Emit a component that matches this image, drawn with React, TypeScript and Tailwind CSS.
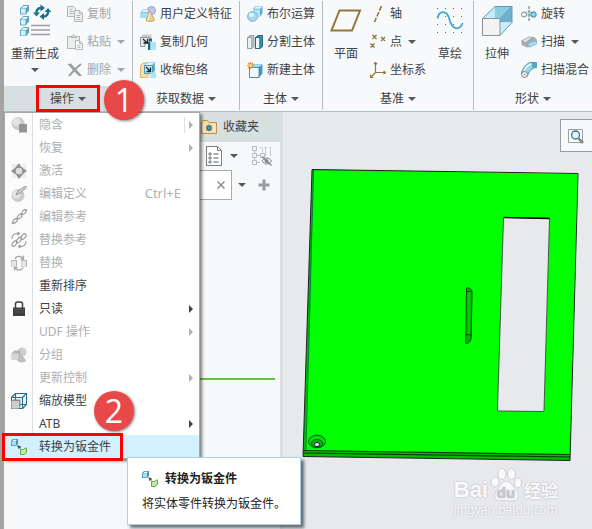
import type { ReactNode } from "react";
import clsx from "clsx";

function Caret({ muted = false }: { muted?: boolean }) {
  return (
    <svg
      className={clsx("h-1 w-2 shrink-0", muted ? "fill-[#a3a5a7]" : "fill-[#55585a]")}
      viewBox="0 0 8 4"
    >
      <path d="M0 0h8L4 4z" />
    </svg>
  );
}

function SmallCube({ x, y }: { x: number; y: number }) {
  return (
    <g transform={`translate(${x} ${y})`}>
      <path d="M.5 3 3 .5h5.500v5.500L6 9H.5z" fill="#55a7c8" />
      <path d="M.5 3H6v6H.5z" fill="#d4f1fb" stroke="#4a9dbf" strokeWidth=".8" />
      <path d="M1.500 2.700 3.500 1h4.500L6.300 2.700z" fill="#fff" />
      <path d="M3 .5h5.500v5.500" fill="none" stroke="#3b8db0" strokeWidth=".7" />
    </g>
  );
}

/* Ribbon icons */

function RegenerateIcon() {
  return (
    <svg className="h-8 w-8" viewBox="0 0 32 32">
      <SmallCube x={1} y={1} />
      <SmallCube x={1} y={12} />
      <SmallCube x={1} y={23} />
      <path d="M12 21.500h19M12 26h19M12 30.500h19" stroke="#9b9d9f" strokeWidth="1.600" />
      <path d="M17.500 10C17 6.500 18.500 4 22 4M29 6.500c.5 3.500-1 6-4.500 6" fill="none" stroke="#1b6f8f" strokeWidth="2.400" />
      <path d="M21.500.5 26 4l-4.500 3.500zM25 9v7l-4.500-3.500zM14 8.500h7L17.500 12.500zM25.500 8h7L29 4z" fill="#1b6f8f" />
    </svg>
  );
}

function CopyIcon() {
  return (
    <svg className="h-4 w-4" viewBox="0 0 16 16" stroke="#b3b5b7" fill="#eff0f1">
      <path d="M.5.5h6l2 2v8h-8z" />
      <path d="M2.500 3.500h3M2.500 5.500h4M2.500 7.500h4" />
      <path d="M7.500 4.500h5l3 3v8h-8z" />
      <path d="M12.500 4.500v3h3M9.500 9.500h4M9.500 11.500h4M9.500 13.500h4" fill="none" />
    </svg>
  );
}

function PasteIcon() {
  return (
    <svg className="h-4 w-4" viewBox="0 0 16 16" stroke="#b3b5b7" fill="#eceded">
      <path d="M.5 2.500h12v12H.5z" />
      <path d="M3.500 3.500v-1h2l1-2 1 2h2v1z" />
      <path d="M8.500 6.500h4l3 3v6h-7z" fill="#f8f9fa" />
      <path d="M12.500 6.500v3h3M10.500 11.500h3M10.500 13.500h3" fill="none" />
    </svg>
  );
}

function DeleteIcon() {
  return (
    <svg className="h-4 w-4" viewBox="0 0 16 16">
      <path d="m.5 2 3.500-.5C7 5 11 9 15 14h-3C8 10.500 4 6 .5 2z" fill="#9a9c9e" />
      <path d="M14 2C9.500 5.500 5 10 2 14" stroke="#9a9c9e" strokeWidth="2" fill="none" />
    </svg>
  );
}

function UserFeatureIcon() {
  return (
    <svg className="h-4 w-4" viewBox="0 0 16 16">
      <circle cx="11.500" cy="4.500" r="4" fill="#c3c8ea" stroke="#7a86c4" strokeWidth=".7" />
      <path d="M.5 6.500 3 3.500h7L8 6.500V12H.5z" fill="#5fb0d0" />
      <path d="M1.500 6 3.300 4H9L7.500 6z" fill="#e3f6fd" />
      <path d="M.5 6.500H8V12H.5z" fill="#a6def4" />
      <path d="m10 5 4.500 9c-1 2-7 2-8.500 0z" fill="#eccf92" stroke="#b58b3d" strokeWidth=".7" />
      <path d="M9.800 6.500 8 14" stroke="#faedcf" strokeWidth="1.200" />
    </svg>
  );
}

function CopyGeometryIcon() {
  return (
    <svg className="h-4 w-4" viewBox="0 0 16 16">
      <path d="M.5 3.500 3 .5h8.500V4L9 6.500z" fill="#c7cbcf" />
      <path d="M.5 3.500H9V9H5v3.500H.5z" fill="#e6e8ea" stroke="#7c8085" strokeWidth=".8" />
      <path d="m3 5 3.500 3.500M7.500 5v4h-4" stroke="#222" strokeWidth="1.300" fill="none" />
      <path d="M9 4.500h3V7.500H9zM8 8h2.500v8H8z" fill="#1d6485" />
      <path d="M10.500 8H16v8h-5.500z" fill="#a7e6fb" />
    </svg>
  );
}

function ShrinkwrapIcon() {
  return (
    <svg className="h-4 w-4" viewBox="0 0 16 16">
      <path d="M.5 3.500 3 1h5v14.500H.5z" fill="#f8e2ac" stroke="#c49c4a" strokeWidth=".7" />
      <path d="M4 3.500 6.500.5H15v8L12.500 11.500H4z" fill="#5fb0cf" />
      <path d="M5 3 7 1h7l-1.500 2z" fill="#e0f5fc" />
      <path d="M4.500 3.500h8v8h-8z" fill="#bdeafa" stroke="#2b7ea2" strokeWidth=".7" />
      <path d="m6 5 4 4M10.500 5.500v4h-4" stroke="#222" strokeWidth="1.300" fill="none" />
      <path d="M10.500 10.500H16V16h-5.500z" fill="#a7e6fb" />
      <path d="M4.500 12.500H9.500v3h-5z" fill="#f5dda2" />
    </svg>
  );
}

function BooleanIcon() {
  return (
    <svg className="h-4 w-4" viewBox="0 0 16 16">
      <path d="M6 3 8 .5h7.500v7L13 10.500H6z" fill="#5fb0cf" />
      <path d="M6 3.500h7v7H6z" fill="#b5e5f7" />
      <path d="M7 2.800 8.500 1H15l-2 1.800z" fill="#e8f8fd" />
      <circle cx="5.500" cy="10.500" r="5" fill="#a5d9ec" stroke="#5ba7c4" strokeWidth=".7" />
      <ellipse cx="4.500" cy="9" rx="2.500" ry="2" fill="#e4f6fc" />
    </svg>
  );
}

function SplitBodyIcon() {
  return (
    <svg className="h-4 w-4" viewBox="0 0 16 16" strokeWidth=".9">
      <path d="M.5 3.500 3 1.500h4v11l-2 2H.5z" fill="#c1cace" stroke="#8d999f" />
      <path d="M.5 3.500h4.300v11H.5z" fill="#e8f2f5" stroke="#8d999f" />
      <path d="m8.500 3.500 2.500-2h4.500v11l-2.500 2H8.500z" fill="#3d91b5" stroke="#17617f" />
      <path d="M8.500 3.500h4.300v11H8.500z" fill="#eaf8fd" stroke="#17617f" />
    </svg>
  );
}

function NewBodyIcon() {
  return (
    <svg className="h-4 w-4" viewBox="0 0 16 16">
      <path d="m2.500 5.500 3-3h10v9L12 15.500H2.500z" fill="#4b9bbb" />
      <path d="M5 5h7l2.500-2H6z" fill="#a2dff5" />
      <path d="M2.500 5.500H12v10H2.500z" fill="#f1fafd" stroke="#2d7898" strokeWidth=".8" />
      <path d="M3.500 0v7M0 3.500h7M1 1l5 5M6 1 1 6" stroke="#e8912a" strokeWidth="1.200" />
      <circle cx="3.500" cy="3.500" r="1.300" fill="#fff3c4" />
    </svg>
  );
}

function PlaneIcon() {
  return (
    <svg className="h-8 w-8" viewBox="0 0 32 32">
      <path d="M9.500 6.500H30L22 26.500H1.500z" fill="none" stroke="#94763a" strokeWidth="2" />
    </svg>
  );
}

function AxisIcon() {
  return (
    <svg className="h-4 w-4" viewBox="0 0 16 16">
      <path d="M11.500 0 4.500 16" stroke="#94763a" strokeWidth="1.600" strokeDasharray="5 1.500" />
    </svg>
  );
}

function PointIcon() {
  return (
    <svg className="h-4 w-4" viewBox="0 0 16 16" stroke="#94763a" strokeWidth="1.400">
      <path d="m2.500 1 4 4M6.500 1l-4 4M11 3l4 4M15 3l-4 4M.5 9.500l4 4M4.500 9.500l-4 4" />
    </svg>
  );
}

function CsysIcon() {
  return (
    <svg className="h-4 w-4" viewBox="0 0 16 16" stroke="#94763a" strokeWidth="1.200" fill="none">
      <path d="M5.500 0v10.500H15M5.500 10.500l-5 5M4 2 5.500.5 7 2M13.500 9l2 1.500-2 1.500M.5 12.500v3h3" />
    </svg>
  );
}

const gridDots = [3, 11, 19, 27];

function SketchIcon() {
  return (
    <svg className="h-8 w-8" viewBox="0 0 32 32">
      {gridDots.map((x) =>
        gridDots.map((y) => <rect key={`${x}-${y}`} x={x} y={y + 1} width="1" height="1" fill="#666" />)
      )}
      <path
        d="M3.500 14.500C5 6 13 5.500 15.500 15.500S25 27.500 28.700 19"
        fill="none"
        stroke="#3ea8d6"
        strokeWidth="1.800"
      />
    </svg>
  );
}

function ExtrudeIcon() {
  return (
    <svg className="h-8 w-8" viewBox="0 0 32 32">
      <path d="M1.500 14.500 14 2.500h17L19 14.500z" fill="#c3edfb" />
      <path d="M14 2.500h17L19 14.500h-5z" fill="#8ccce2" />
      <path d="m19 14.500 12-12v16H19z" fill="#6fb1cc" />
      <path d="M19 31.500V18.500h12z" fill="#c8effb" />
      <path d="M1.500 14.500 14 2.500h17v16l-12 13M19 14.500l12-12" fill="none" stroke="#5a9db8" />
      <path d="M1.500 14.500H19v17H1.500z" fill="#f3f3f3" stroke="#8f9497" />
    </svg>
  );
}

function RevolveIcon() {
  return (
    <svg className="h-4 w-4" viewBox="0 0 16 16">
      <path d="M3 6c3-1.500 7-1.500 10 0v5c-3-1.500-7-1.500-10 0z" fill="#c4e4ef" />
      <circle cx="3" cy="8.500" r="2.500" fill="#f3f5f6" stroke="#7c8489" />
      <circle cx="12.500" cy="8.500" r="2.700" fill="#8ad5f0" stroke="#2687ac" />
      <path d="M8 0v16" stroke="#666" strokeDasharray="3 1" />
    </svg>
  );
}

function SweepIcon() {
  return (
    <svg className="h-4 w-4" viewBox="0 0 16 16">
      <path d="m.5 7 7-4h5L15.500 5v3L9 8v5l-3 .5L.5 11z" fill="#a7aeb2" />
      <path d="m.5 7 7-4 5 .5L7 6.500 6 9z" fill="#dde1e3" stroke="#878e92" strokeWidth=".6" />
      <path d="M7 9 15.500 6.500V10L9 13l-2-1z" fill="#a6dcef" stroke="#5a9db8" strokeWidth=".6" />
    </svg>
  );
}

function SweptBlendIcon() {
  return (
    <svg className="h-4 w-4" viewBox="0 0 16 16">
      <path d="M.5 11C2 5 6 1 10 .5h5.500v5C11 6 8 9 6.500 14z" fill="#9bd7ec" stroke="#327f9f" strokeWidth=".8" />
      <path d="M11 .5h4.500v5L11 6z" fill="#5aa7c5" />
      <path d="M3 9C5 5 7 3 10 2" stroke="#e5f8fd" strokeWidth="1.500" fill="none" />
      <circle cx="3.500" cy="12.500" r="3" fill="#eceeef" stroke="#7b8387" />
      <path d="M3 12h1v1H3z" fill="#555" />
    </svg>
  );
}

/* Menu icons */

function SuppressIcon() {
  return (
    <svg className="h-4 w-4" viewBox="0 0 16 16">
      <circle cx="7" cy="6.500" r="6.500" fill="#cbcbcb" />
      <circle cx="5.500" cy="5" r="4" fill="#e4e4e4" />
      <path d="M8 7h8v8.500H8z" fill="#959595" />
    </svg>
  );
}

function ActivateIcon() {
  return (
    <svg className="h-4 w-4" viewBox="0 0 16 16">
      <path d="M1 1h14v14H1z" fill="#ededed" />
      <path d="m8 0 2 4 2.500 1.500L16 8l-3.500 2.500L8 16l-3-4.500L0 8l4-3z" fill="#929292" />
      <circle cx="8" cy="8" r="4" fill="#dedede" stroke="#8e8e8e" strokeWidth="1.300" />
    </svg>
  );
}

function EditDefinitionIcon() {
  return (
    <svg className="h-4 w-4" viewBox="0 0 16 16">
      <circle cx="7" cy="9.500" r="6.500" fill="#cacaca" />
      <circle cx="5.500" cy="8.500" r="4" fill="#e5e5e5" />
      <path d="m5 9 2-4 7.500-5 1 1.500L9 7z" fill="#d5d5d5" stroke="#8b8b8b" strokeWidth=".9" />
    </svg>
  );
}

function EditReferencesIcon() {
  return (
    <svg className="h-4 w-4" viewBox="0 0 16 16" fill="none" stroke="#999" strokeWidth="1.100">
      <ellipse cx="4" cy="12" rx="2.800" ry="1.500" transform="rotate(-45 4 12)" />
      <ellipse cx="8.500" cy="7.500" rx="2.800" ry="1.500" transform="rotate(-45 8.500 7.500)" />
      <ellipse cx="13" cy="3" rx="2.800" ry="1.500" transform="rotate(-45 13 3)" />
      <path d="m1 15 2-2M5.500 10.500l1.500-1.500M10 6l1.500-1.500M14 2l1.500-1.500" />
    </svg>
  );
}

function ReplaceReferencesIcon() {
  return (
    <svg className="h-4 w-4" viewBox="0 0 16 16" fill="none" stroke="#9b9b9b" strokeWidth="1.100">
      <ellipse cx="3.500" cy="11.500" rx="3.300" ry="1.800" transform="rotate(-50 3.500 11.500)" />
      <ellipse cx="8" cy="8" rx="3.300" ry="1.800" transform="rotate(-50 8 8)" />
      <ellipse cx="12.500" cy="4.500" rx="3.300" ry="1.800" transform="rotate(-50 12.500 4.500)" />
      <path d="M1 7c0-4 2-6 7-5.500M6.500 0l2 1.500-2 1.500M15 9c0 4-2 6-7 5.500M9.500 13l-2 1.500 2 1.500" />
    </svg>
  );
}

function ReplaceIcon() {
  return (
    <svg className="h-4 w-4" viewBox="0 0 16 16">
      <path
        d="M4 4c1.500-3.500 6.500-3.500 8 0M12.500.5v3.500h-3M12 12.500c-1.500 3.500-6.500 3.500-8 0M3.500 15.500v-3h3"
        fill="none"
        stroke="#a5a5a5"
        strokeWidth="1.300"
      />
      <path d="M0 5h6v6.500H0zM10 5h6v6.500h-6z" fill="#b5b5b5" />
      <path d="M.5 6H5v5H.5zM10.500 6H15v5h-4.500z" fill="#e6e6e6" />
    </svg>
  );
}

function LockIcon() {
  return (
    <svg className="h-4 w-4" viewBox="0 0 16 16">
      <path d="M4.500 7V3c0-1.500 1-2 2-2h3c1 0 2 .5 2 2v4" fill="none" stroke="#3f3f3f" strokeWidth="1.500" />
      <path d="M2 6.500h12V15H2z" fill="#3f3f3f" />
      <path d="M3 8.500h10M3 11h10" stroke="#555" />
    </svg>
  );
}

function GroupIcon() {
  return (
    <svg className="h-4 w-4" viewBox="0 0 16 16">
      <circle cx="11" cy="5" r="4.500" fill="#cecece" />
      <path d="m.5 6.500 3-3h6v6L8 12.500H.5z" fill="#b3b3b3" />
      <path d="M.5 6.500h7v6h-7z" fill="#d6d6d6" />
      <path d="m10 6.500 5 7c-1 2.500-7 2.500-9 0z" fill="#bfbfbf" />
    </svg>
  );
}

function ScaleModelIcon() {
  return (
    <svg className="h-4 w-4" viewBox="0 0 16 16">
      <path
        d="M.5 4.500h11v11H.5zM.5 4.500l4-4h11v11l-4 4M11.500 4.500l4-4M4.500.5v11h11M.5 15.500l4-4"
        fill="#eef8fb"
        fillOpacity=".5"
        stroke="#256f8c"
        strokeWidth="1.100"
      />
      <path d="m.5 8 1.500-1.500h7.500v7L8 15.500H.5z" fill="#8f8f8f" />
      <path d="M.5 8H8v7.500H.5z" fill="#cdcdcd" />
    </svg>
  );
}

function ConvertIcon() {
  return (
    <svg className="h-4 w-4 shrink-0" viewBox="0 0 16 16">
      <path d="M0 2 2 0h5v4.500L5 7H0z" fill="#3d90b6" />
      <path d="M.7 2.200H5V6.300H.7z" fill="#a5e0f8" />
      <path d="M2.500.8H6L5 2H1.500z" fill="#eafaff" />
      <path d="m6.500 6.500 2 2M9 7v2H7" stroke="#444" strokeWidth="1.200" fill="none" />
      <path d="M9.500 10.500h3l1.500-1.500h1.500v4.500L13 15.500H9.500z" fill="#bfeba2" stroke="#67a44d" />
    </svg>
  );
}

/* Ribbon */

function BigButton({ icon, label, caret = false }: { icon: ReactNode; label: string; caret?: boolean }) {
  return (
    <button className="flex shrink-0 flex-col items-center pt-1">
      {icon}
      <span className="mt-2 leading-5">{label}</span>
      {caret && (
        <span className="mt-1">
          <Caret />
        </span>
      )}
    </button>
  );
}

interface SmallButtonProps {
  icon: ReactNode;
  label: string;
  caret?: boolean;
  muted?: boolean;
}

function SmallButton({ icon, label, caret = false, muted = false }: SmallButtonProps) {
  return (
    <button
      disabled={muted}
      className={clsx("flex h-7 items-center gap-1 whitespace-nowrap", muted && "text-[#a3a5a7]")}
    >
      {icon}
      <span>{label}</span>
      {caret && (
        <span className="ml-0.5">
          <Caret muted={muted} />
        </span>
      )}
    </button>
  );
}

interface RibbonGroupProps {
  label: string;
  className: string;
  active?: boolean;
  children: ReactNode;
}

function RibbonGroup({ label, className, active = false, children }: RibbonGroupProps) {
  return (
    <section className={clsx("flex flex-col", className)}>
      <div className="flex h-[86px]">{children}</div>
      <div className={clsx("flex h-[25px] justify-center", active && "bg-[#d8dfe2]")}>
        <button
          className={clsx(
            "flex items-center gap-1 px-3.5",
            active && "-mt-px -mb-px outline-3 -outline-offset-3 outline-[#ff0000]"
          )}
        >
          {label}
          <Caret />
        </button>
      </div>
    </section>
  );
}

function Separator() {
  return <div className="my-px w-px shrink-0 bg-[#b5bbbe]" />;
}

function Ribbon() {
  return (
    <header className="flex h-28 border-b border-[#b2bfbf] bg-[#f8f9fb]">
      <RibbonGroup label="操作" className="w-32 shrink-0" active>
        <div className="flex gap-2 pl-[7px]">
          <BigButton icon={<RegenerateIcon />} label="重新生成" caret />
          <div>
            <SmallButton icon={<CopyIcon />} label="复制" muted />
            <SmallButton icon={<PasteIcon />} label="粘贴" caret muted />
            <SmallButton icon={<DeleteIcon />} label="删除" caret muted />
          </div>
        </div>
      </RibbonGroup>
      <Separator />
      <RibbonGroup label="获取数据" className="w-[106px] shrink-0">
        <div className="pl-[7px]">
          <SmallButton icon={<UserFeatureIcon />} label="用户定义特征" />
          <SmallButton icon={<CopyGeometryIcon />} label="复制几何" />
          <SmallButton icon={<ShrinkwrapIcon />} label="收缩包络" />
        </div>
      </RibbonGroup>
      <Separator />
      <RibbonGroup label="主体" className="w-[82px] shrink-0">
        <div className="pl-[7px]">
          <SmallButton icon={<BooleanIcon />} label="布尔运算" />
          <SmallButton icon={<SplitBodyIcon />} label="分割主体" />
          <SmallButton icon={<NewBodyIcon />} label="新建主体" />
        </div>
      </RibbonGroup>
      <Separator />
      <RibbonGroup label="基准" className="w-[150px] shrink-0">
        <div className="flex gap-2 pl-[7px]">
          <BigButton icon={<PlaneIcon />} label="平面" />
          <div className="w-14">
            <SmallButton icon={<AxisIcon />} label="轴" />
            <SmallButton icon={<PointIcon />} label="点" caret />
            <SmallButton icon={<CsysIcon />} label="坐标系" />
          </div>
          <BigButton icon={<SketchIcon />} label="草绘" />
        </div>
      </RibbonGroup>
      <Separator />
      <RibbonGroup label="形状" className="min-w-0 flex-1">
        <div className="flex gap-2 pl-[7px]">
          <BigButton icon={<ExtrudeIcon />} label="拉伸" />
          <div>
            <SmallButton icon={<RevolveIcon />} label="旋转" />
            <SmallButton icon={<SweepIcon />} label="扫描" caret />
            <SmallButton icon={<SweptBlendIcon />} label="扫描混合" />
          </div>
        </div>
      </RibbonGroup>
    </header>
  );
}

/* Operations menu */

interface MenuEntry {
  label: string;
  icon?: ReactNode;
  shortcut?: string;
  submenu?: boolean;
  split?: boolean;
  enabled?: boolean;
  selected?: boolean;
}

const menuEntries: MenuEntry[] = [
  { label: "隐含", icon: <SuppressIcon />, submenu: true, split: true },
  { label: "恢复", submenu: true },
  { label: "激活", icon: <ActivateIcon /> },
  { label: "编辑定义", icon: <EditDefinitionIcon />, shortcut: "Ctrl+E" },
  { label: "编辑参考", icon: <EditReferencesIcon /> },
  { label: "替换参考", icon: <ReplaceReferencesIcon /> },
  { label: "替换", icon: <ReplaceIcon /> },
  { label: "重新排序", enabled: true },
  { label: "只读", icon: <LockIcon />, submenu: true, enabled: true },
  { label: "UDF 操作", submenu: true },
  { label: "分组", icon: <GroupIcon /> },
  { label: "更新控制", submenu: true },
  { label: "缩放模型", icon: <ScaleModelIcon />, enabled: true },
  { label: "ATB", submenu: true, enabled: true },
  { label: "转换为钣金件", icon: <ConvertIcon />, enabled: true, selected: true },
];

function OperationsMenu() {
  return (
    <div
      role="menu"
      className="absolute top-0 left-0 w-[196px] border border-[#a6a9ab] bg-white shadow-[2px_2px_3px_rgba(0,0,0,0.5)]"
    >
      {menuEntries.map((entry) => (
        <button
          key={entry.label}
          role="menuitem"
          disabled={!entry.enabled}
          className={clsx(
            "flex h-[23px] w-full items-center text-left",
            entry.selected && "bg-[#d2f0fe]",
            entry.enabled ? "text-[#3f4245]" : "text-[#aeb0b2]"
          )}
        >
          <span
            className={clsx(
              "flex h-full w-7 items-center justify-center",
              !entry.selected && "border-r border-[#dcdfe1] bg-[#fbfbfb]"
            )}
          >
            {entry.icon}
          </span>
          <span className="flex-1 pl-1.5">{entry.label}</span>
          {entry.shortcut && <span className="pr-[18px] text-[13px]">{entry.shortcut}</span>}
          {entry.submenu && (
            <span className={clsx("flex h-4 items-center pr-1.5 pl-1", entry.split && "border-l border-[#dcdfe1]")}>
              <svg className="h-2 w-1 fill-current" viewBox="0 0 4 8">
                <path d="M0 0v8l4-4z" />
              </svg>
            </span>
          )}
        </button>
      ))}
    </div>
  );
}

function Tooltip() {
  return (
    <div
      role="tooltip"
      className="absolute top-[345px] left-[123px] w-[174px] border border-[#a9d3e8] bg-white py-2.5 pl-3.5 text-[#222] shadow-[3px_3px_3px_rgba(0,0,0,0.55)]"
    >
      <div className="flex h-[22px] items-center gap-[7px] font-bold">
        <ConvertIcon />
        转换为钣金件
      </div>
      <p className="h-6 pt-1 leading-5 whitespace-nowrap">将实体零件转换为钣金件。</p>
    </div>
  );
}

/* Model tree */

function ModelTree() {
  return (
    <aside className="flex w-[279px] shrink-0 flex-col border-r-3 border-[#dae1e1] bg-[#f6f8fa]">
      <div className="flex h-[30px] items-center gap-1.5 bg-[#d7dfdf] pl-[197px]">
        <svg className="h-4 w-4" viewBox="0 0 16 16">
          <path d="M.5 14.500V3l1-1.500h5L8 3.500h7.500v11z" fill="#f7dda0" stroke="#b99352" />
          <path d="M1.500 5h13v8.500h-13z" fill="#fbe6b8" />
          <path d="M8 5.500v7M4.500 9h7M5.500 6.500l5 5M10.500 6.500l-5 5" stroke="#1c607f" strokeWidth="1.200" />
          <circle cx="8" cy="9" r=".8" fill="#fbe6b8" />
        </svg>
        <span>收藏夹</span>
      </div>
      <div className="flex h-7 items-center gap-2 pl-[202px]">
        <button aria-label="设置">
          <svg className="h-5 w-4" viewBox="0 0 16 20">
            <path d="M.5.5h11l4 4v15H.5z" fill="#fff" stroke="#7a8084" />
            <path d="M11.500.5v4h4" fill="none" stroke="#7a8084" />
            <path d="M7.500 8h5M7.500 12h5M7.500 16h5" stroke="#555b5f" />
            <path d="M3 7h2v2H3zM3 11h2v2H3zM3 15h2v2H3z" fill="#fff" stroke="#555b5f" strokeWidth=".8" />
          </svg>
        </button>
        <Caret />
        <button aria-label="树过滤器" className="ml-1.5">
          <svg className="h-5 w-5" viewBox="0 0 20 20" fill="#f5f6f7" stroke="#b9bcbe">
            <path d="M2.500 4.500v12M4 9.500h5M4 16.500h4" fill="none" />
            <path d="M7.500 1.500h3v5M13.500 1v9M12 1.500h3M18.500 1v9M17 1.500h2" fill="none" stroke="#cdd0d2" />
            <path d="M.5.5h4v4h-4zM.5 7.500h4v4h-4zM.5 14.500h4v4h-4zM8.500 7.500h4v4h-4z" />
            <path d="M10 15c2.500-4 7-4 9.500 0-2.500 4-7 4-9.500 0z" stroke="#858585" />
            <circle cx="14.500" cy="15" r="1.500" fill="#858585" stroke="#858585" />
            <path d="m10 10.500 9.500 9" stroke="#858585" strokeWidth="1.300" />
          </svg>
        </button>
      </div>
      <div className="flex h-[30px] items-center">
        <div className="flex h-full w-[228px] items-center border border-[#a4acae] bg-white">
          <input aria-label="搜索" className="min-w-0 flex-1 pl-2 outline-none" />
          <button aria-label="清除" className="pr-1.5">
            <svg className="h-2 w-2" viewBox="0 0 8 8" stroke="#8c8f91" strokeWidth="1.500">
              <path d="m.5.5 7 7M7.500.5l-7 7" />
            </svg>
          </button>
        </div>
        <button aria-label="搜索选项" className="ml-1.5">
          <Caret />
        </button>
        <button aria-label="添加" className="ml-3">
          <svg className="h-3 w-3" viewBox="0 0 12 12" stroke="#999c9e" strokeWidth="3">
            <path d="M6 .5v11M.5 6h11" />
          </svg>
        </button>
      </div>
      <hr className="mt-[178px] mr-[5px] h-0.5 border-0 bg-[#62c13e]" />
    </aside>
  );
}

/* Graphics window */

function SheetPanel() {
  return (
    <svg className="mt-3.5 ml-4 h-[298px] w-[282px] shrink-0" viewBox="299 166 282 298">
      <path d="M312 169.500 578 173.500 570 460.500 303 456.500z" fill="#0b0" stroke="#222" />
      <path d="M314 170.500 577.500 174 569.500 454.500 305.500 450.500z" fill="#00ff00" />
      <path d="M313.500 170 306 450" stroke="#064" strokeWidth=".8" />
      <path d="m303.500 450.500 266 4M303 453l267 4" stroke="#043c04" strokeWidth="1.100" fill="none" />
      <path
        d="m504.500 217.500 44 .8q1 0 1 1L544 410.500q0 1-1 1l-44.500-.5q-1 0-1-1l6-191.500q0-1 1-1z"
        fill="#e8e9ed"
        stroke="#333"
        strokeWidth=".8"
      />
      <path d="m503.500 217.500 46 1" stroke="#000" strokeWidth="1.300" />
      <path d="M466.500 288c3-1 5.500 2 5.500 4l-.8 45c0 4-3 7-5.500 6.500z" fill="#0b0" stroke="#064006" />
      <path d="M469 292v43" stroke="#00d400" strokeWidth="1.500" />
      <path d="M466 291.500h5.500M465.500 334.500l6 .5" stroke="#064006" />
      <ellipse cx="317" cy="441.500" rx="8.500" ry="6.300" fill="#0d0" stroke="#053" />
      <ellipse cx="317" cy="443.500" rx="5.500" ry="4" fill="#0b0" stroke="#053" />
      <ellipse cx="317" cy="444.500" rx="2.500" ry="2.200" fill="#ddd" stroke="#222" />
    </svg>
  );
}

function Watermark() {
  return (
    <div className="mr-[34px] flex flex-col self-end pt-0.5 text-[#fafafc] [text-shadow:0_0_2px_#a9abb0]">
      <div className="flex h-9 items-end justify-end gap-0.5 font-['Liberation_Sans',sans-serif] font-bold">
        <span className="text-[22px] leading-6">Bai</span>
        <svg className="h-[34px] w-8" viewBox="0 0 32 34" fill="#fafafc" stroke="#c9cace" strokeWidth=".9">
          <ellipse cx="5" cy="14" rx="4" ry="5" />
          <ellipse cx="12" cy="6" rx="4" ry="5.500" />
          <ellipse cx="21.500" cy="6" rx="4" ry="5.500" />
          <ellipse cx="28" cy="15" rx="3.500" ry="5" />
          <path d="M16.500 13c4 0 5 4 9 8s4 12-3 12c-3 0-3-.5-6-.5s-4 .5-6.500.5c-6 0-7-7-3-11s5-9 9.500-9z" />
          <text x="16" y="30" textAnchor="middle" fontSize="15" fill="#c6c7cb" stroke="none">
            du
          </text>
        </svg>
        <span className="font-['Noto_Sans_CJK_SC',sans-serif] text-[17px] leading-6">经验</span>
      </div>
      <span className="font-['Noto_Sans',sans-serif] text-xs leading-4">jingyan.baidu.com</span>
    </div>
  );
}

function GraphicsWindow() {
  return (
    <main className="flex min-w-0 flex-1 flex-col overflow-hidden bg-[#e8e9ed]">
      <button
        aria-label="重新调整"
        className="mt-[7px] flex h-[33px] w-8 shrink-0 items-center self-end border border-r-0 border-[#9a9d9f] bg-[#f8f9fb] pl-[7px]"
      >
        <svg className="h-4 w-4" viewBox="0 0 16 16">
          <path d="M.5 1.500h14v13H.5z" fill="#fff" stroke="#9b9ea0" />
          <circle cx="7.500" cy="7" r="4" fill="#e4f5fb" stroke="#2b7897" strokeWidth="1.300" />
          <path d="m10.500 10.500 4.500 4.500" stroke="#83888b" strokeWidth="2.500" />
        </svg>
      </button>
      <SheetPanel />
      <Watermark />
    </main>
  );
}

function StepBadge({ step, className }: { step: number; className: string }) {
  return (
    <div
      className={clsx(
        "absolute flex size-10 items-center justify-center rounded-full bg-[#e84848] font-['Open_Sans',sans-serif] text-[32px] leading-10 text-white shadow-[1px_1px_3px_rgba(0,0,0,0.5)]",
        className
      )}
    >
      {step}
    </div>
  );
}

export default function App() {
  return (
    <div className="relative flex min-h-screen overflow-hidden bg-[#f8f9fb] font-['Noto_Sans','Noto_Sans_CJK_SC',sans-serif] text-xs text-[#3f4245]">
      <div className="w-1 shrink-0 bg-[#a5a3a2]" />
      <div className="flex min-w-0 flex-1 flex-col">
        <Ribbon />
        <div className="relative flex flex-1">
          <ModelTree />
          <GraphicsWindow />
          <OperationsMenu />
          <Tooltip />
        </div>
      </div>
      <div className="absolute top-[433px] left-0.5 h-7 w-[121px] border-3 border-[#ff0000]" />
      <StepBadge step={1} className="top-20 left-[104px]" />
      <StepBadge step={2} className="top-[391px] left-[94px]" />
    </div>
  );
}
